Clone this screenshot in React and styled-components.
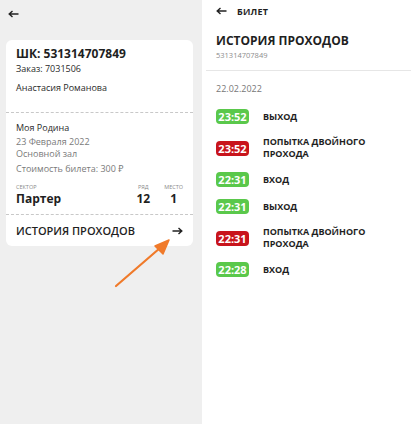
import React from "react";
import styled, { createGlobalStyle } from "styled-components";

const GlobalStyle = createGlobalStyle`
  html, body { margin: 0; padding: 0; }
  body {
    font-family: "Open Sans", "Noto Sans", sans-serif;
    color: #1f1f1f;
    -webkit-font-smoothing: antialiased;
  }
`;

const Screen = styled.div`
  display: flex;
  width: 420px;
  height: 424px;
  overflow: hidden;
  position: relative;
`;

const LeftPane = styled.div`
  width: 202px;
  flex: none;
  background: #efefef;
  padding: 7px 9px 0 6px;
  box-sizing: border-box;
`;

const RightPane = styled.div`
  flex: 1;
  background: #fff;
  padding: 4px 9px 0 4px;
  box-sizing: border-box;
`;

const BackBtn = styled.div`
  display: flex;
  align-items: center;
  gap: 10px;
  height: 14px;
  padding-left: ${(p) => p.$indent}px;
  font-size: 9px;
  font-weight: 700;
  letter-spacing: 0.2px;
`;

const Card = styled.div`
  margin-top: 19px;
  background: #fff;
  border-radius: 6px;
  padding: 6px 10px 0 10px;
`;

const Barcode = styled.div`
  font-size: 12px;
  font-weight: 700;
  line-height: 16px;
`;

const Line = styled.div`
  font-size: 9px;
  line-height: ${(p) => p.$lh || 12}px;
  color: ${(p) => (p.$muted ? "#7a7a7a" : "#2a2a2a")};
  margin-top: ${(p) => p.$mt || 0}px;
`;

const Dashed = styled.div`
  margin: ${(p) => p.$m};
  border-top: 1px dashed #c8c8c8;
  margin-left: -10px;
  margin-right: -10px;
`;

const Seats = styled.div`
  display: flex;
  align-items: flex-end;
  gap: 14px;
  margin-top: 8px;
`;

const Seat = styled.div`
  display: flex;
  flex-direction: column;
  align-items: ${(p) => (p.$grow ? "flex-start" : "center")};
  flex: ${(p) => (p.$grow ? 1 : "none")};
`;

const SeatLabel = styled.div`
  font-size: 5.5px;
  line-height: 8px;
  color: #8a8a8a;
  text-transform: uppercase;
`;

const SeatValue = styled.div`
  font-size: 12px;
  font-weight: 700;
  line-height: 15px;
`;

const HistoryLink = styled.div`
  display: flex;
  align-items: center;
  justify-content: space-between;
  height: 31px;
  font-size: 11px;
  font-weight: 600;
`;

const Title = styled.div`
  margin-top: 15px;
  padding-left: 10px;
  font-size: 12px;
  font-weight: 700;
  line-height: 16px;
`;

const SubId = styled.div`
  padding-left: 10px;
  font-size: 7.5px;
  line-height: 12px;
  color: #8c8c8c;
`;

const Separator = styled.div`
  margin-top: 9px;
  border-top: 1px solid #e6e6e6;
`;

const DateLabel = styled.div`
  margin-top: 11px;
  padding-left: 10px;
  font-size: 9px;
  line-height: 13px;
  color: #777;
`;

const Events = styled.div`
  display: flex;
  flex-direction: column;
  gap: 12px;
  margin-top: 14px;
  padding-left: 10px;
`;

const Event = styled.div`
  display: flex;
  align-items: center;
  gap: 14px;
`;

const Badge = styled.div`
  flex: none;
  width: 33px;
  height: 15px;
  border-radius: 4px;
  display: flex;
  align-items: center;
  justify-content: center;
  font-size: 11px;
  font-weight: 700;
  color: #fff;
  background: ${(p) => (p.$bad ? "#c8141c" : "#5ac84b")};
`;

const EventText = styled.div`
  font-size: 9px;
  font-weight: 700;
  line-height: 12px;
  max-width: 115px;
  text-transform: uppercase;
`;

const Overlay = styled.svg`
  position: absolute;
  left: 0;
  top: 0;
  pointer-events: none;
`;

const ArrowLeft = () => (
  <svg width="11" height="8" viewBox="0 0 11 8">
    <path d="M10.5 4H1.5M4.5 1L1.2 4l3.3 3" fill="none" stroke="#222" strokeWidth="1.4" />
  </svg>
);

const ArrowRight = () => (
  <svg width="11" height="8" viewBox="0 0 11 8">
    <path d="M0.5 4h9M6.5 1l3.3 3-3.3 3" fill="none" stroke="#222" strokeWidth="1.4" />
  </svg>
);

const events = [
  { time: "23:52", text: "Выход" },
  { time: "23:52", text: "Попытка двойного прохода", bad: true },
  { time: "22:31", text: "Вход" },
  { time: "22:31", text: "Выход" },
  { time: "22:31", text: "Попытка двойного прохода", bad: true },
  { time: "22:28", text: "Вход" },
];

export default function App() {
  return (
    <Screen>
      <GlobalStyle />
      <LeftPane>
        <BackBtn $indent={2}>
          <ArrowLeft />
        </BackBtn>
        <Card>
          <Barcode>ШК: 531314707849</Barcode>
          <Line $lh={13}>Заказ: 7031506</Line>
          <Line $mt={7}>Анастасия Романова</Line>
          <Dashed $m="18px 0 8px" />
          <Line $lh={13}>Моя Родина</Line>
          <Line $muted $lh={12} $mt={2}>23 Февраля 2022</Line>
          <Line $muted $lh={12}>Основной зал</Line>
          <Line $muted $lh={12} $mt={3}>Стоимость билета: 300 ₽</Line>
          <Seats>
            <Seat $grow>
              <SeatLabel>Сектор</SeatLabel>
              <SeatValue>Партер</SeatValue>
            </Seat>
            <Seat>
              <SeatLabel>Ряд</SeatLabel>
              <SeatValue>12</SeatValue>
            </Seat>
            <Seat>
              <SeatLabel>Место</SeatLabel>
              <SeatValue>1</SeatValue>
            </Seat>
          </Seats>
          <Dashed $m="8px 0 0" />
          <HistoryLink>
            <span>ИСТОРИЯ ПРОХОДОВ</span>
            <ArrowRight />
          </HistoryLink>
        </Card>
      </LeftPane>
      <RightPane>
        <BackBtn $indent={10}>
          <ArrowLeft />
          <span>БИЛЕТ</span>
        </BackBtn>
        <Title>ИСТОРИЯ ПРОХОДОВ</Title>
        <SubId>531314707849</SubId>
        <Separator />
        <DateLabel>22.02.2022</DateLabel>
        <Events>
          {events.map((e, i) => (
            <Event key={i}>
              <Badge $bad={e.bad}>{e.time}</Badge>
              <EventText>{e.text}</EventText>
            </Event>
          ))}
        </Events>
      </RightPane>
      <Overlay width="420" height="424">
        <line x1="116" y1="286" x2="160" y2="248" stroke="#f07a2a" strokeWidth="2.2" strokeLinecap="round" />
        <path d="M169 240 L155 246 L163 254 Z" fill="#f07a2a" stroke="#f07a2a" strokeWidth="1.5" strokeLinejoin="round" />
      </Overlay>
    </Screen>
  );
}
